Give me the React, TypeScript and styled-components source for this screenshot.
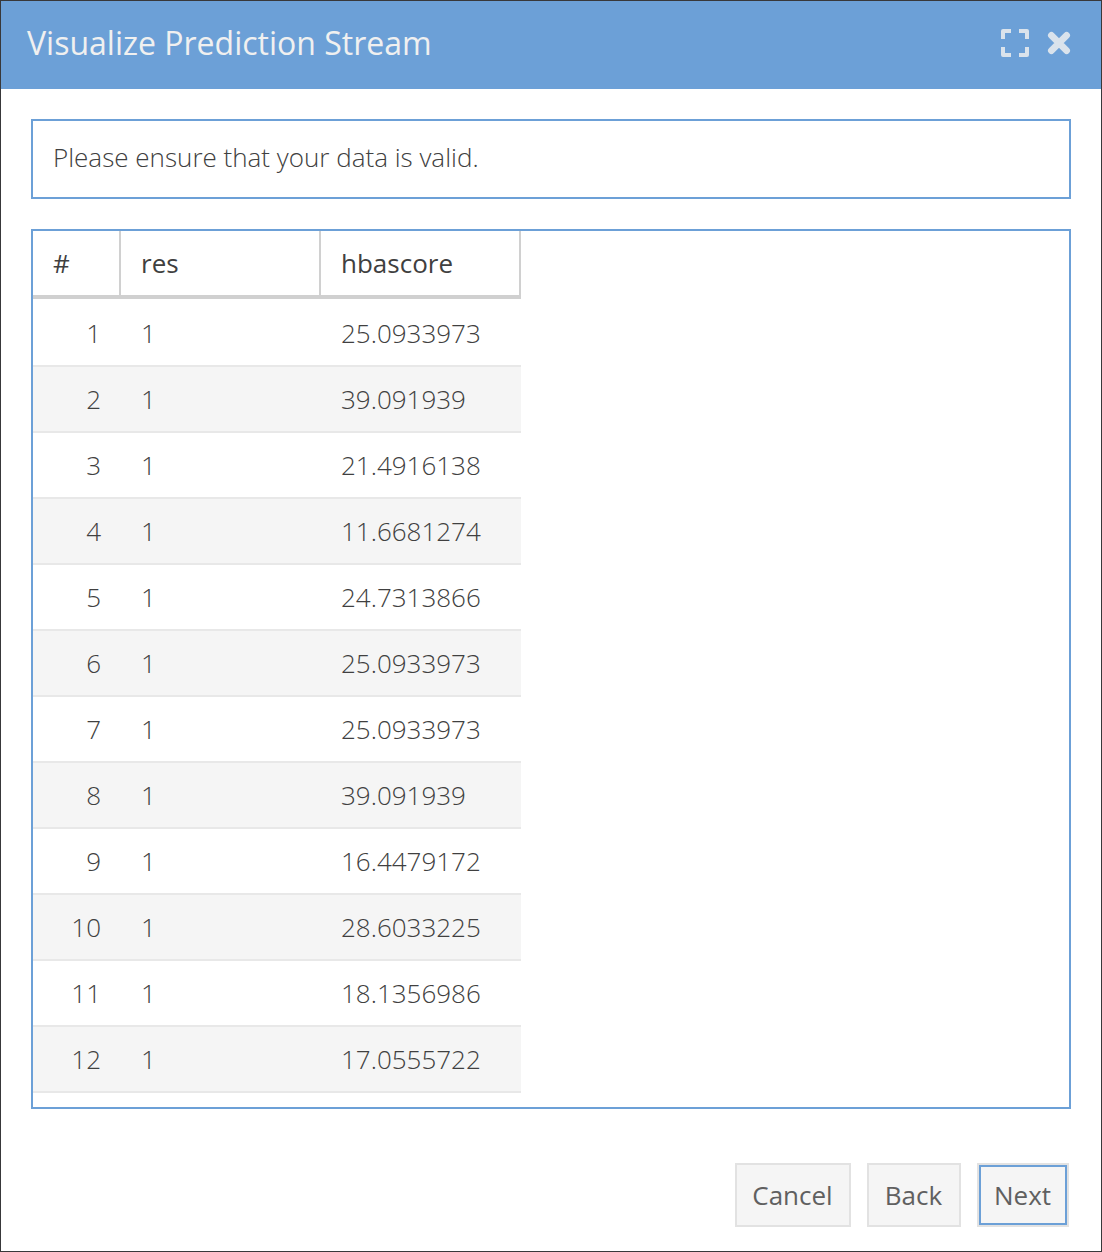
import React from 'react';
import styled, { createGlobalStyle, css } from 'styled-components';

const GlobalStyle = createGlobalStyle`
  *, *::before, *::after { box-sizing: border-box; }
  body {
    margin: 0;
    font-family: 'Open Sans', 'Noto Sans', sans-serif;
    color: #404040;
    background: #fff;
  }
`;

const Dialog = styled.section`
  display: flex;
  flex-direction: column;
  width: 1102px;
  height: 1252px;
  border: 1px solid #38383a;
  background: #fff;
`;

const TitleBar = styled.header`
  display: flex;
  align-items: center;
  justify-content: space-between;
  flex: none;
  height: 88px;
  padding: 0 28px 4px 26px;
  background: #6ca0d7;
`;

const Title = styled.h1`
  margin: 0;
  padding-bottom: 1px;
  font-size: 32px;
  line-height: 43px;
  font-weight: 400;
  color: #f0f0f0;
`;

const Tools = styled.div`
  display: flex;
  align-items: center;
  gap: 16px;
`;

const ToolButton = styled.button`
  display: flex;
  padding: 0;
  border: 0;
  background: none;
  color: #dae3ec;
`;

const Body = styled.div`
  display: flex;
  flex-direction: column;
  gap: 30px;
  padding: 30px 30px 0;
`;

const Message = styled.div`
  height: 80px;
  padding: 18px 20px;
  border: 2px solid #6ca0d7;
  font-size: 26px;
  line-height: 36px;
  font-weight: 300;
`;

const GridPanel = styled.div`
  height: 880px;
  border: 2px solid #6ca0d7;
  overflow: hidden;
`;

const rowColumns = css`
  display: grid;
  grid-template-columns: 88px 200px 200px;
  width: 488px;
`;

const HeaderRow = styled.div`
  ${rowColumns}
  height: 68px;
  border-bottom: 4px solid #d0d0d0;
`;

const HeaderCell = styled.div`
  padding: 14px 20px;
  border-right: 2px solid #d0d0d0;
  font-size: 26px;
  line-height: 36px;
`;

const Rows = styled.div`
  padding-top: 2px;
`;

const Row = styled.div<{ $alt: boolean }>`
  ${rowColumns}
  height: 66px;
  border-bottom: 2px solid #e8e8e8;
  background: ${(p) => (p.$alt ? '#f5f5f5' : '#fff')};
`;

const Cell = styled.div<{ $align?: 'right' }>`
  padding: 14px 20px;
  font-size: 26px;
  line-height: 36px;
  font-weight: 300;
  text-align: ${(p) => p.$align ?? 'left'};
`;

const Footer = styled.footer`
  display: flex;
  justify-content: flex-end;
  gap: 16px;
  padding: 54px 32px 0;
`;

const FooterButton = styled.button<{ $width: number; $focused?: boolean }>`
  width: ${(p) => p.$width}px;
  height: 64px;
  padding: 0 1px 0 0;
  border: 2px solid #e2e2e2;
  background: #f5f5f5;
  box-shadow: ${(p) => (p.$focused ? 'inset 0 0 0 2px #6ca0d7' : 'none')};
  color: #606060;
  font: 400 26px/36px 'Open Sans', 'Noto Sans', sans-serif;
`;

const scores = [
  '25.0933973', '39.091939', '21.4916138', '11.6681274',
  '24.7313866', '25.0933973', '25.0933973', '39.091939',
  '16.4479172', '28.6033225', '18.1356986', '17.0555722',
];

const MaximizeIcon = () => (
  <svg width="28" height="28" viewBox="0 0 28 28" fill="none" stroke="currentColor" strokeWidth="4" strokeLinejoin="round">
    <path d="M2 10V2H10M18 2H26V10M26 18V26H18M10 26H2V18" />
  </svg>
);

const CloseIcon = () => (
  <svg width="28" height="28" viewBox="0 0 28 28" fill="none" stroke="currentColor" strokeWidth="6.8" strokeLinecap="round">
    <path d="M6.4 6.4L21.6 21.6M21.6 6.4L6.4 21.6" />
  </svg>
);

export default function App() {
  return (
    <>
      <GlobalStyle />
      <Dialog>
        <TitleBar>
          <Title>Visualize Prediction Stream</Title>
          <Tools>
            <ToolButton aria-label="Maximize"><MaximizeIcon /></ToolButton>
            <ToolButton aria-label="Close"><CloseIcon /></ToolButton>
          </Tools>
        </TitleBar>
        <Body>
          <Message>Please ensure that your data is valid.</Message>
          <GridPanel>
            <HeaderRow>
              <HeaderCell>#</HeaderCell>
              <HeaderCell>res</HeaderCell>
              <HeaderCell>hbascore</HeaderCell>
            </HeaderRow>
            <Rows>
              {scores.map((score, i) => (
                <Row key={i} $alt={i % 2 === 1}>
                  <Cell $align="right">{i + 1}</Cell>
                  <Cell>1</Cell>
                  <Cell>{score}</Cell>
                </Row>
              ))}
            </Rows>
          </GridPanel>
        </Body>
        <Footer>
          <FooterButton $width={116}>Cancel</FooterButton>
          <FooterButton $width={94}>Back</FooterButton>
          <FooterButton $width={92} $focused>Next</FooterButton>
        </Footer>
      </Dialog>
    </>
  );
}
